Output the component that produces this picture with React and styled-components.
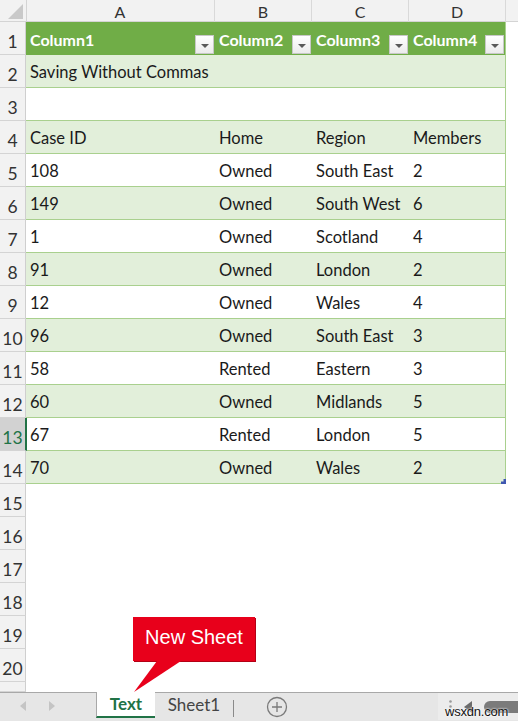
import React from "react";
import styled, { createGlobalStyle } from "styled-components";

const GRID = "26px 189px 97px 97px 97px 1fr";

const headers = ["Column1", "Column2", "Column3", "Column4"];

const tableRows = [
  ["Saving Without Commas", "", "", ""],
  ["", "", "", ""],
  ["Case ID", "Home", "Region", "Members"],
  ["108", "Owned", "South East", "2"],
  ["149", "Owned", "South West", "6"],
  ["1", "Owned", "Scotland", "4"],
  ["91", "Owned", "London", "2"],
  ["12", "Owned", "Wales", "4"],
  ["96", "Owned", "South East", "3"],
  ["58", "Rented", "Eastern", "3"],
  ["60", "Owned", "Midlands", "5"],
  ["67", "Rented", "London", "5"],
  ["70", "Owned", "Wales", "2"],
];

const emptyRows = [15, 16, 17, 18, 19, 20];

const App = () => {
  return (
    <>
      <GlobalStyle />
      <Page>
        <Sheet>
          <ColHeaderRow>
            <Corner>
              <svg width="26" height="22" viewBox="0 0 26 22">
                <polygon points="23,4 23,19 8,19" fill="#c9c9c9" />
              </svg>
            </Corner>
            {["A", "B", "C", "D", ""].map((l, i) => (
              <ColLetter key={i}>{l}</ColLetter>
            ))}
          </ColHeaderRow>

          <Row>
            <RowNum>1</RowNum>
            {headers.map((h, i) => (
              <HeaderCell key={h} last={i === 3}>
                <span>{h}</span>
                <FilterButton>
                  <svg width="8" height="5" viewBox="0 0 8 5">
                    <polygon points="0,0 8,0 4,4" fill="#5a5a5a" />
                  </svg>
                </FilterButton>
              </HeaderCell>
            ))}
            <Outside />
          </Row>

          {tableRows.map((cells, r) => {
            const n = r + 2;
            return (
              <Row key={n}>
                <RowNum selected={n === 13}>{n}</RowNum>
                {cells.map((c, i) => (
                  <Cell key={i} band={n % 2 === 0} last={i === 3}>
                    {c}
                    {n === 14 && i === 3 && <ResizeHandle />}
                  </Cell>
                ))}
                <Outside />
              </Row>
            );
          })}

          {emptyRows.map((n) => (
            <Row key={n}>
              <RowNum>{n}</RowNum>
              <Blank />
            </Row>
          ))}
          <PartialRow>
            <RowNum />
            <Blank />
          </PartialRow>
        </Sheet>

        <TabBar>
          <NavArrows>
            <svg width="6" height="10" viewBox="0 0 6 10">
              <polygon points="6,0 6,10 0,5" fill="#c4c4c4" />
            </svg>
            <svg width="6" height="10" viewBox="0 0 6 10">
              <polygon points="0,0 0,10 6,5" fill="#c4c4c4" />
            </svg>
          </NavArrows>
          <SheetTab active width={59}>Text</SheetTab>
          <SheetTab width={78}>Sheet1</SheetTab>
          <TabDivider />
          <AddSheet>
            <svg width="22" height="22" viewBox="0 0 22 22">
              <circle cx="11" cy="11" r="9.5" fill="none" stroke="#7a7a7a" strokeWidth="1.3" />
              <path d="M11 6v10M6 11h10" stroke="#7a7a7a" strokeWidth="1.3" />
            </svg>
          </AddSheet>
          <ScrollArea>
            <svg width="3" height="13" viewBox="0 0 3 13">
              <circle cx="1.5" cy="1.5" r="1.3" fill="#9a9a9a" />
              <circle cx="1.5" cy="6.5" r="1.3" fill="#9a9a9a" />
              <circle cx="1.5" cy="11.5" r="1.3" fill="#9a9a9a" />
            </svg>
            <svg width="8" height="12" viewBox="0 0 8 12">
              <polygon points="8,0 8,12 0,6" fill="#6b6b6b" />
            </svg>
            <Thumb />
          </ScrollArea>
          <Watermark>wsxdn.com</Watermark>
        </TabBar>

        <Callout>
          <CalloutBox>New Sheet</CalloutBox>
          <CalloutTail width="60" height="32" viewBox="0 0 60 32">
            <polygon points="24,0 48,0 1,31" fill="#e8001b" />
          </CalloutTail>
        </Callout>
      </Page>
    </>
  );
};

const GlobalStyle = createGlobalStyle`
  html, body {
    margin: 0;
    padding: 0;
    background: #fff;
    overflow: hidden;
  }
  body {
    font-family: Lato, "Open Sans", sans-serif;
  }
`;

const Page = styled.div`
  position: relative;
  width: 518px;
  height: 721px;
  display: flex;
  flex-direction: column;
  overflow: hidden;
  background: #fff;
`;

const Sheet = styled.div`
  flex: 1;
  overflow: hidden;
`;

const ColHeaderRow = styled.div`
  display: grid;
  grid-template-columns: ${GRID};
  height: 22px;
  background: #f2f2f2;
  border-bottom: 1px solid #d4d4d4;
  box-sizing: border-box;
`;

const Corner = styled.div`
  border-right: 1px solid #d4d4d4;
  line-height: 0;
  margin-right: -1px;
`;

const ColLetter = styled.div`
  display: flex;
  align-items: center;
  justify-content: center;
  border-right: 1px solid #d9d9d9;
  font-size: 16px;
  color: #333;
  padding-top: 1px;
  &:last-child {
    border-right: none;
  }
`;

const Row = styled.div`
  display: grid;
  grid-template-columns: ${GRID};
  height: 33px;
`;

const PartialRow = styled(Row)`
  height: 10px;
`;

const RowNum = styled.div`
  display: flex;
  align-items: flex-end;
  justify-content: center;
  padding-bottom: 2px;
  box-sizing: border-box;
  font-size: 17.5px;
  color: ${({ selected }) => (selected ? "#217346" : "#333")};
  background: ${({ selected }) => (selected ? "#d2d2d2" : "#f2f2f2")};
  border-bottom: 1px solid #d4d4d4;
  border-right: ${({ selected }) =>
    selected ? "2px solid #217346" : "1px solid #cfcfcf"};
  margin-right: ${({ selected }) => (selected ? "-1px" : "0")};
  position: relative;
  z-index: 1;
`;

const HeaderCell = styled.div`
  display: flex;
  align-items: center;
  justify-content: space-between;
  padding-left: 4px;
  box-sizing: border-box;
  background: #70ad47;
  color: #fff;
  font-weight: 700;
  font-size: 16px;
  white-space: nowrap;
  border-right: ${({ last }) => (last ? "1px solid #a9d08e" : "none")};

  span {
    padding-top: 1px;
  }
`;

const FilterButton = styled.div`
  align-self: flex-end;
  width: 19px;
  height: 19px;
  margin: 0 1px 1px 0;
  box-sizing: border-box;
  border: 1px solid #c8c8c8;
  background: linear-gradient(#ffffff, #ececec);
  display: flex;
  align-items: center;
  justify-content: center;
  padding-top: 3px;
`;

const Cell = styled.div`
  position: relative;
  display: flex;
  align-items: center;
  padding: 1px 0 0 4px;
  box-sizing: border-box;
  font-size: 16.5px;
  color: #1a1a1a;
  white-space: nowrap;
  background: ${({ band }) => (band ? "#e2efda" : "#fff")};
  border-bottom: 1px solid #a9d08e;
  border-right: ${({ last }) => (last ? "1px solid #a9d08e" : "none")};
`;

const Outside = styled.div`
  background: #fff;
`;

const Blank = styled.div`
  grid-column: 2 / -1;
  background: #fff;
`;

const ResizeHandle = styled.div`
  position: absolute;
  right: -1px;
  bottom: -1px;
  width: 5px;
  height: 5px;
  background: #3f57b0;
  clip-path: polygon(100% 0, 100% 100%, 0 100%, 0 50%, 50% 50%, 50% 0);
`;

const TabBar = styled.div`
  position: relative;
  height: 29px;
  flex-shrink: 0;
  box-sizing: border-box;
  border-top: 1px solid #a8a8a8;
  background: #e6e6e6;
  display: flex;
  align-items: flex-start;
`;

const NavArrows = styled.div`
  width: 96px;
  height: 26px;
  display: flex;
  align-items: center;
  gap: 23px;
  padding-left: 20px;
  box-sizing: border-box;
`;

const SheetTab = styled.div`
  width: ${({ width }) => width}px;
  box-sizing: border-box;
  display: flex;
  align-items: center;
  justify-content: center;
  font-size: 17px;
  padding-bottom: 2px;
  font-weight: ${({ active }) => (active ? 700 : 400)};
  color: ${({ active }) => (active ? "#217346" : "#444")};
  background: ${({ active }) => (active ? "#fff" : "transparent")};
  border-left: ${({ active }) => (active ? "1px solid #a8a8a8" : "none")};
  border-bottom: ${({ active }) => (active ? "2px solid #217346" : "none")};
  margin-top: ${({ active }) => (active ? "-1px" : "0")};
  height: ${({ active }) => (active ? "26px" : "25px")};
`;

const TabDivider = styled.div`
  width: 1px;
  height: 17px;
  margin-top: 7px;
  background: #8a8a8a;
`;

const AddSheet = styled.div`
  margin: 3px 0 0 32px;
  line-height: 0;
`;

const ScrollArea = styled.div`
  margin-left: auto;
  width: 80px;
  height: 27px;
  display: flex;
  align-items: center;
  gap: 12px;
  padding-left: 11px;
  box-sizing: border-box;
  background: #ececec;
`;

const Thumb = styled.div`
  flex: 1;
  height: 12px;
  border-radius: 6px 0 0 6px;
  background: #7b7b7b;
`;

const Watermark = styled.div`
  position: absolute;
  left: 445px;
  top: 11px;
  font-family: "Liberation Sans", Arial, sans-serif;
  font-size: 13px;
  letter-spacing: -0.2px;
  color: #111;
  text-shadow: 0 0 2px #fff, 0 0 2px #fff;
`;

const Callout = styled.div`
  position: absolute;
  left: 133px;
  top: 617px;
  width: 122px;
  z-index: 5;
`;

const CalloutBox = styled.div`
  height: 44px;
  background: #e8001b;
  color: #fff;
  font-family: "Liberation Sans", Arial, sans-serif;
  font-size: 20px;
  display: flex;
  align-items: center;
  justify-content: center;
  padding-bottom: 3px;
  box-sizing: border-box;
  box-shadow: 1px 1px 0 #b30015;
`;

const CalloutTail = styled.svg`
  position: absolute;
  left: 0;
  top: 44px;
`;

export default App;
